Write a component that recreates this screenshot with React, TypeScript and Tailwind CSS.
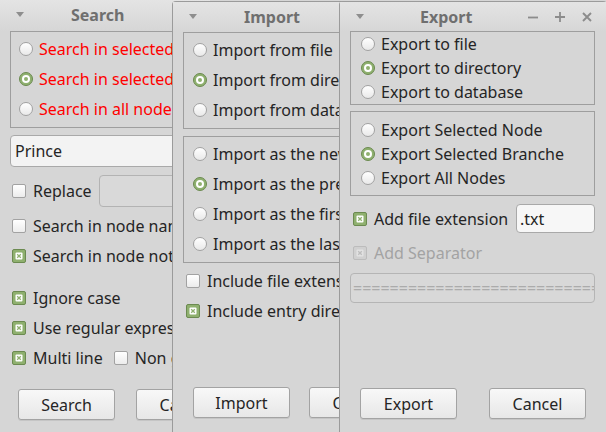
import clsx from 'clsx'

const Tri = () => (
  <svg width="8" height="5" viewBox="0 0 8 5" className="shrink-0">
    <path d="M0 0h8L4 5z" fill="#8e8e8e" />
  </svg>
)

const Radio = ({
  checked,
  label,
  red,
  h = 'h-[30px]',
}: {
  checked?: boolean
  label: string
  red?: boolean
  h?: string
}) => (
  <div className={clsx('flex items-center whitespace-nowrap', h)}>
    <span
      className={clsx(
        'w-[14px] h-[14px] rounded-full border flex items-center justify-center shrink-0',
        checked
          ? 'bg-[#8fb06f] border-[#6b8a50]'
          : 'bg-linear-to-b from-white to-[#e9e9e9] border-[#a2a2a2]',
      )}
    >
      {checked && (
        <span className="w-[8px] h-[8px] rounded-full bg-white flex items-center justify-center">
          <span className="w-[4px] h-[4px] rounded-full bg-[#8fb06f]" />
        </span>
      )}
    </span>
    <span className={clsx('ml-[6px]', red ? 'text-[#ff0000]' : 'text-[#252525]')}>
      {label}
    </span>
  </div>
)

const Check = ({
  checked,
  label,
  disabled,
  h = 'h-[30px]',
}: {
  checked?: boolean
  label: string
  disabled?: boolean
  h?: string
}) => (
  <div className={clsx('flex items-center whitespace-nowrap', h)}>
    <span
      className={clsx(
        'w-[14px] h-[14px] rounded-[2px] border flex items-center justify-center shrink-0',
        disabled
          ? 'bg-[#d0d0d0] border-[#bcbcbc]'
          : checked
            ? 'bg-[#8fb06f] border-[#6b8a50]'
            : 'bg-linear-to-b from-white to-[#ececec] border-[#a2a2a2]',
      )}
    >
      {checked && (
        <svg width="8" height="8" viewBox="0 0 8 8">
          <rect x="0.5" y="0.5" width="7" height="7" rx="1" fill={disabled ? '#e2e2e2' : '#fff'} />
          <path
            d="M2.2 2.2l3.6 3.6M5.8 2.2L2.2 5.8"
            stroke={disabled ? '#bdbdbd' : '#8fb06f'}
            strokeWidth="1.3"
          />
        </svg>
      )}
    </span>
    <span className={clsx('ml-[7px]', disabled ? 'text-[#a3a3a3]' : 'text-[#252525]')}>
      {label}
    </span>
  </div>
)

const Button = ({ label, className }: { label: string; className?: string }) => (
  <div
    className={clsx(
      'h-[31px] w-[97px] shrink-0 rounded-[3px] border border-[#a3a3a3] bg-linear-to-b from-[#f8f8f8] to-[#e7e7e7] flex items-center justify-center text-[#252525] shadow-[0_1px_0_rgba(0,0,0,0.08)]',
      className,
    )}
  >
    {label}
  </div>
)

const TitleBar = ({
  title,
  titleMl,
  controls,
  h = 'h-[31px]',
}: {
  title: string
  titleMl: string
  controls?: boolean
  h?: string
}) => (
  <div className={clsx('shrink-0 flex items-center pl-[16px] pr-[15px] bg-linear-to-b from-[#e4e4e4] to-[#d6d6d6]', h)}>
    <span className="-mt-[2px]">
      <Tri />
    </span>
    <span className={clsx('font-bold text-[#6f6f6f] -mt-[1px]', titleMl)}>{title}</span>
    {controls && (
      <div className="ml-auto flex items-center gap-[17px] -mt-[1px]">
        <svg width="10" height="10" viewBox="0 0 10 10">
          <path d="M0 5.5h10" stroke="#8c8c8c" strokeWidth="1.8" />
        </svg>
        <svg width="10" height="10" viewBox="0 0 10 10">
          <path d="M0 5h10M5 0v10" stroke="#8c8c8c" strokeWidth="1.8" />
        </svg>
        <svg width="10" height="10" viewBox="0 0 10 10">
          <path d="M1 1l8 8M9 1L1 9" stroke="#8c8c8c" strokeWidth="1.9" />
        </svg>
      </div>
    )}
  </div>
)

export default function App() {
  return (
    <div className="relative w-[606px] h-[432px] overflow-hidden bg-[#d6d6d6] font-['Noto_Sans',sans-serif] text-[16px] leading-none">
      {/* Search window */}
      <div className="absolute left-0 top-0 w-[210px] h-[432px] flex flex-col bg-[#d6d6d6]">
        <TitleBar title="Search" titleMl="ml-[47px]" />
        <div className="flex-1 flex flex-col px-[10px] pb-[12px]">
          <div className="border border-[#9e9e9e] pl-[8px] pt-[2px] pb-[3px]">
            <Radio red label="Search in selected node" />
            <Radio red checked label="Search in selected branch" />
            <Radio red label="Search in all nodes" />
          </div>
          <div className="mt-[7px] h-[32px] rounded-[4px] border border-[#a9a9a9] bg-[#f3f3f3] flex items-center pl-[4px] text-[#252525]">
            Prince
          </div>
          <div className="mt-[8px] h-[32px] flex items-center pl-[2px]">
            <Check label="Replace" h="h-[32px]" />
            <div className="ml-[7px] h-[32px] flex-1 rounded-[4px] border border-[#b3b3b3] bg-[#d9d9d9]" />
          </div>
          <div className="mt-[4px] pl-[2px]">
            <Check label="Search in node names" />
            <Check checked label="Search in node notes" />
          </div>
          <div className="mt-[12px] pl-[2px]">
            <Check checked label="Ignore case" />
            <Check checked label="Use regular expressions" />
            <div className="flex items-center">
              <Check checked label="Multi line" />
              <span className="ml-[11px]">
                <Check label="Non greedy" />
              </span>
            </div>
          </div>
          <div className="mt-auto flex pl-[8px] gap-[21px]">
            <Button label="Search" />
            <Button label="Cancel" />
          </div>
        </div>
      </div>

      {/* Import window */}
      <div className="absolute left-[172px] top-[1px] w-[210px] h-[431px] flex flex-col bg-[#d6d6d6] border-l border-t border-[#9b9b9b] rounded-tl-[4px]">
        <TitleBar title="Import" titleMl="ml-[47px]" h="h-[30px]" />
        <div className="flex-1 flex flex-col pl-[10px] pb-[14px]">
          <div className="border border-[#9e9e9e] pl-[9px] pt-[2px] pb-[3px]">
            <Radio label="Import from file" />
            <Radio checked label="Import from directory" />
            <Radio label="Import from database" />
          </div>
          <div className="mt-[7px] border border-[#9e9e9e] pl-[9px] pt-[2px] pb-[3px]">
            <Radio label="Import as the new node" />
            <Radio checked label="Import as the previous sibling" />
            <Radio label="Import as the first child" />
            <Radio label="Import as the last child" />
          </div>
          <div className="mt-[3px] pl-[3px]">
            <Check label="Include file extension" />
            <Check checked label="Include entry directory" />
          </div>
          <div className="mt-auto flex pl-[10px] gap-[19px]">
            <Button label="Import" className="w-[96px]" />
            <Button label="Cancel" />
          </div>
        </div>
      </div>

      {/* Export window */}
      <div className="absolute left-[339px] top-[1px] w-[268px] h-[431px] flex flex-col bg-[#d6d6d6] border-l border-t border-[#9b9b9b] rounded-t-[4px]">
        <TitleBar title="Export" titleMl="ml-[56px]" h="h-[30px]" controls />
        <div className="flex-1 flex flex-col pl-[10px] pr-[12px] pb-[13px]">
          <div className="-mt-[1px] border border-[#9e9e9e] pl-[10px]">
            <Radio h="h-[24px]" label="Export to file" />
            <Radio h="h-[24px]" checked label="Export to directory" />
            <Radio h="h-[24px]" label="Export to database" />
          </div>
          <div className="mt-[6px] border border-[#9e9e9e] pl-[10px] pt-[6px] pb-[5px]">
            <Radio h="h-[24px]" label="Export Selected Node" />
            <Radio h="h-[24px]" checked label="Export Selected Branche" />
            <Radio h="h-[24px]" label="Export All Nodes" />
          </div>
          <div className="mt-[8px] h-[29px] flex items-center pl-[3px]">
            <Check checked label="Add file extension" h="h-[29px]" />
            <div className="ml-auto w-[79px] h-[29px] rounded-[4px] border border-[#a9a9a9] bg-[#f7f7f7] flex items-center pl-[3px] text-[#252525]">
              .txt
            </div>
          </div>
          <div className="mt-[8px] pl-[3px]">
            <Check checked disabled label="Add Separator" h="h-[24px]" />
          </div>
          <div className="mt-[8px] h-[30px] rounded-[4px] border border-[#b5b5b5] bg-[#d8d8d8] flex items-center pl-[2px] overflow-hidden whitespace-nowrap text-[#ababab]">
            ======================================
          </div>
          <div className="mt-auto flex pl-[10px] gap-[32px]">
            <Button label="Export" className="w-[96px]" />
            <Button label="Cancel" className="w-[96px]" />
          </div>
        </div>
      </div>
    </div>
  )
}
